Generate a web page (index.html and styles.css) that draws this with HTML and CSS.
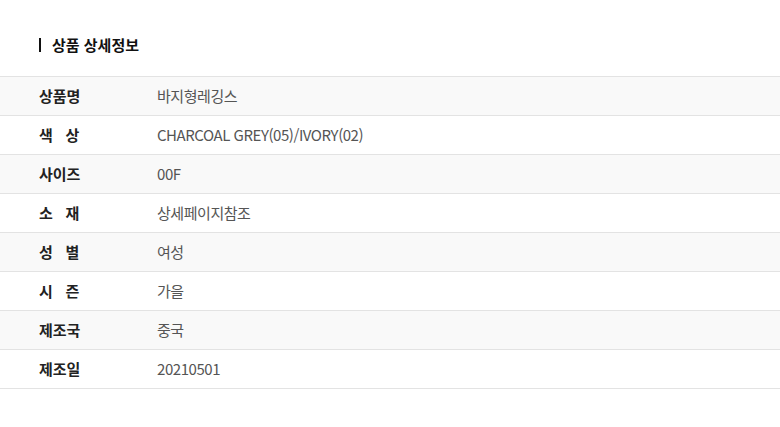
FILE: index.html
```html
<!DOCTYPE html>
<html lang="ko">
<head>
<meta charset="utf-8">
<link rel="stylesheet" href="styles.css">
</head>
<body>
<div class="wrap">
  <h2 class="title"><span class="bar"></span>상품 상세정보</h2>
  <div class="table">
    <div class="row alt"><div class="th">상품명</div><div class="td">바지형레깅스</div></div>
    <div class="row"><div class="th">색&nbsp;&nbsp;&nbsp;상</div><div class="td">CHARCOAL GREY(05)/IVORY(02)</div></div>
    <div class="row alt"><div class="th">사이즈</div><div class="td">00F</div></div>
    <div class="row"><div class="th">소&nbsp;&nbsp;&nbsp;재</div><div class="td">상세페이지참조</div></div>
    <div class="row alt"><div class="th">성&nbsp;&nbsp;&nbsp;별</div><div class="td">여성</div></div>
    <div class="row"><div class="th">시&nbsp;&nbsp;&nbsp;즌</div><div class="td">가을</div></div>
    <div class="row alt"><div class="th">제조국</div><div class="td">중국</div></div>
    <div class="row"><div class="th">제조일</div><div class="td">20210501</div></div>
  </div>
</div>
</body>
</html>
```
FILE: styles.css
```css
html, body {
  margin: 0;
  padding: 0;
  background: #fff;
}
body {
  font-family: "Noto Sans CJK KR", "Noto Sans", sans-serif;
  color: #222;
}
.wrap {
  padding-top: 33px;
}
.title {
  margin: 0 0 19px 0;
  padding-left: 39px;
  display: flex;
  align-items: center;
  font-size: 15px;
  font-weight: 700;
  line-height: 24px;
  height: 24px;
  color: #111;
}
.bar {
  display: inline-block;
  width: 2px;
  height: 14px;
  background: #111;
  margin-right: 11px;
}
.table {
  border-top: 1px solid #e3e3e3;
}
.row {
  display: flex;
  align-items: center;
  height: 38px;
  border-bottom: 1px solid #e3e3e3;
  font-size: 15px;
  padding-bottom: 1px;
  box-sizing: border-box;
  height: 39px;
}
.row.alt {
  background: #f9f9f9;
}
.th {
  width: 118px;
  padding-left: 39px;
  font-weight: 700;
  color: #222;
  white-space: pre;
}
.td {
  color: #555;
  letter-spacing: -0.45px;
}
```
